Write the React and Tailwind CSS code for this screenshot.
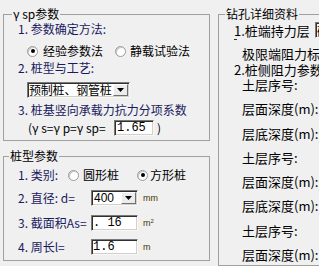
import React from 'react';

const cjk = "font-['Noto_Sans_CJK_SC',sans-serif]";

const Radio = ({ checked }) => (
  <span className="w-[11px] h-[11px] rounded-full border border-[#9a9a9a] bg-white flex items-center justify-center flex-shrink-0 shadow-[inset_1px_1px_0_#c8c8c8]">
    {checked && <span className="w-[4px] h-[4px] rounded-full bg-black" />}
  </span>
);

const Sunken = ({ className = '', children }) => (
  <div
    className={`flex h-[16px] bg-white border border-t-[#7a7a7a] border-l-[#7a7a7a] border-b-[#f8f8f8] border-r-[#f8f8f8] shadow-[inset_1px_1px_0_#303030,inset_-1px_-1px_0_#d4d0c8] overflow-hidden ${className}`}
  >
    {children}
  </div>
);

const DropButton = () => (
  <div className="w-[15px] flex-shrink-0 my-[1px] mr-[1px] bg-[#ececec] border border-t-white border-l-white border-b-[#6f6f6f] border-r-[#6f6f6f] flex items-center justify-center">
    <svg width="7" height="4" viewBox="0 0 7 4">
      <polygon points="0,0 7,0 3.5,4" fill="#000" />
    </svg>
  </div>
);

const Label = ({ children, className = '' }) => (
  <div className={`h-[16px] flex items-center text-[#1a1a5e] text-[12px] leading-[14px] whitespace-nowrap ${className}`}>{children}</div>
);

const Unit = ({ children }) => (
  <span className="ml-[5px] text-[9px] leading-[10px] text-[#4a3600] font-['Liberation_Sans',sans-serif]">{children}</span>
);

const soilRows = [
  '土层序号:',
  '层面深度(m):',
  '层底深度(m):',
  '土层序号:',
  '层面深度(m):',
  '层底深度(m):',
  '土层序号:',
  '层面深度(m):',
];

export default function App() {
  return (
    <div className={`w-[319px] h-[266px] overflow-hidden bg-[#f0f0f0] flex ${cjk}`}>
      {/* Left column */}
      <div className="w-[210px] pl-[3px] flex-shrink-0">
        {/* γsp参数 */}
        <fieldset className="mt-[7px] w-[207px] border border-[#a0a0a0] pb-[4px]">
          <legend className="ml-[8px] px-[1px] text-[12px] leading-[14px] text-black">γ sp参数</legend>
          <Label className="pl-[14px]">1. 参数确定方法:</Label>
          <div className="mt-[5px] h-[18px] flex items-center pl-[23px] text-[12px] text-black">
            <div className="w-[88px] flex items-center gap-[5px]">
              <Radio checked />
              <span>经验参数法</span>
            </div>
            <div className="flex items-center gap-[4px]">
              <Radio />
              <span>静载试验法</span>
            </div>
          </div>
          <Label className="pl-[14px]">2. 桩型与工艺:</Label>
          <Sunken className="mt-[6px] ml-[23px] w-[103px]">
            <div className="flex-1 min-w-0 pl-[1px] flex items-center overflow-hidden whitespace-nowrap text-[12px] leading-[14px] tracking-[-0.2px] text-black">预制桩、钢管桩</div>
            <DropButton />
          </Sunken>
          <Label className="mt-[4px] pl-[14px]">3. 桩基竖向承载力抗力分项系数</Label>
          <div className="mt-[2px] h-[16px] flex items-center pl-[24px] text-[12px] leading-[14px] text-black whitespace-nowrap">
            <span className="w-[86px]">(γ s=γ p=γ sp=</span>
            <Sunken className="w-[40px]">
              <span className="pl-[2px] flex items-center text-[12px] font-['Liberation_Mono',monospace]">1.65</span>
            </Sunken>
            <span className="ml-[3px]">)</span>
          </div>
        </fieldset>

        {/* 桩型参数 */}
        <fieldset className="mt-[8px] w-[207px] border border-[#a0a0a0] pb-[5px]">
          <legend className="ml-[5px] px-[1px] text-[12px] leading-[14px] text-black">桩型参数</legend>
          <div className="mt-[4px] h-[16px] flex items-center pl-[14px] text-[12px] leading-[14px] whitespace-nowrap">
            <span className="w-[50px] text-[#1a1a5e]">1. 类别:</span>
            <div className="w-[69px] flex items-center gap-[4px] text-black">
              <Radio />
              <span>圆形桩</span>
            </div>
            <div className="flex items-center gap-[2px] text-black">
              <Radio checked />
              <span>方形桩</span>
            </div>
          </div>
          <div className="mt-[7px] h-[16px] flex items-center pl-[14px] text-[12px] leading-[14px] whitespace-nowrap">
            <span className="w-[73px] text-[#1a1a5e]">2. 直径: d=</span>
            <Sunken className="w-[47px]">
              <div className="flex-1 pl-[2px] flex items-center text-[12px] font-['Liberation_Sans',sans-serif] text-black">400</div>
              <DropButton />
            </Sunken>
            <Unit>mm</Unit>
          </div>
          <div className="mt-[9px] h-[16px] flex items-center pl-[14px] text-[12px] leading-[14px] whitespace-nowrap">
            <span className="w-[73px] text-[#1a1a5e]">3. 截面积As=</span>
            <Sunken className="w-[47px]">
              <span className="pl-[1px] flex items-center text-[12px] font-['Liberation_Mono',monospace] text-black">. 16</span>
            </Sunken>
            <Unit>
              m<sup className="text-[6px]">2</sup>
            </Unit>
          </div>
          <div className="mt-[8px] h-[16px] flex items-center pl-[14px] text-[12px] leading-[14px] whitespace-nowrap">
            <span className="w-[73px] text-[#1a1a5e]">4. 周长l=</span>
            <Sunken className="w-[47px]">
              <span className="pl-[1px] flex items-center text-[12px] font-['Liberation_Mono',monospace] text-black">1.6</span>
            </Sunken>
            <Unit>m</Unit>
          </div>
        </fieldset>
      </div>

      {/* Right column: 钻孔详细资料 */}
      <fieldset className="ml-[8px] mt-[7px] w-[130px] flex-shrink-0 border border-[#a0a0a0] pb-[20px] text-black">
        <legend className="ml-[6px] px-[1px] text-[12px] leading-[14px]">钻孔详细资料</legend>
        <div className="h-[18px] flex items-center pl-[15px] text-[13px] leading-[15px] whitespace-nowrap">
          <span className="w-[81px] flex-shrink-0">1.桩端持力层</span>
          <Sunken className="w-[40px] flex-shrink-0">
            <span className="pl-[1px] flex items-center text-[12px]">砾石</span>
          </Sunken>
        </div>
        <div className="ml-[15px] w-[3px] h-[1px] bg-[#333]" />
        <div className="mt-[5px] h-[16px] flex items-center pl-[23px] text-[13px] leading-[15px] whitespace-nowrap">
          极限端阻力标准值
        </div>
        <div className="mt-[1px] h-[15px] flex items-center pl-[15px] text-[13px] leading-[14px] whitespace-nowrap">
          2.桩侧阻力参数
        </div>
        <div className="mt-[1px] flex flex-col gap-[10.3px] pl-[23px]">
          {soilRows.map((row, i) => (
            <div key={i} className="h-[14px] flex items-center text-[13px] leading-[14px] whitespace-nowrap">
              {row}
            </div>
          ))}
        </div>
      </fieldset>
    </div>
  );
}
